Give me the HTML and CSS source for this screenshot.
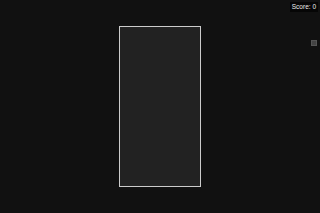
FILE: index.html
```html
<!DOCTYPE html>
<html lang="en">

<head>
    <meta charset="UTF-8">
    <meta name="viewport" content="width=device-width, initial-scale=1.0">
    <title>Tetris</title>
    <link rel="stylesheet" href="styles.css">
</head>

<body>

    <!-- Score -->
    <div class="score">Score: <span id="score">0</span></div>

    <!-- Next piece preview -->
    <div class="preview"><div class="preview-cell"></div></div>

    <!-- Board -->
    <div class="stage">
        <div class="board"></div>
    </div>

</body>

</html>
```

FILE: styles.css
```css
body {
    font-family: "Liberation Sans", Arial, sans-serif;
    background: #111;
    margin: 0;
    height: 100vh;
    overflow: hidden;
}

.stage {
    height: 100%;
    display: flex;
    align-items: center;
    justify-content: center;
}

.board {
    width: 80px;
    height: 159px;
    background: #222;
    border: 1px solid #ccc;
}

.score {
    position: absolute;
    top: 2px;
    right: 2px;
    padding: 1px 2px;
    background: rgba(0, 0, 0, 0.6);
    color: #eee;
    font-size: 6.5px;
    line-height: 8px;
}

.preview {
    position: absolute;
    top: 40px;
    right: 3px;
}

.preview-cell {
    width: 4px;
    height: 4px;
    background: #444;
    border: 1px solid #555;
}
```
